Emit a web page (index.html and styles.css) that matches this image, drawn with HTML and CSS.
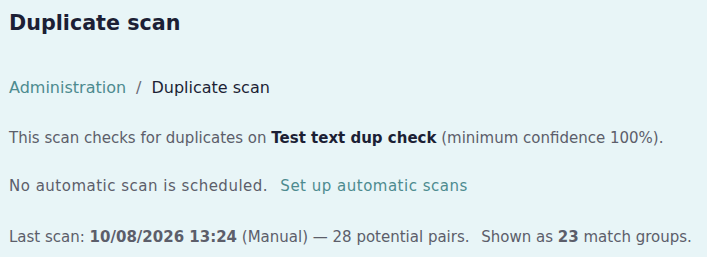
FILE: index.html
```html
<!DOCTYPE html>
<html lang="en">
<head>
<meta charset="utf-8">
<link rel="stylesheet" href="styles.css">
<title>Duplicate scan</title>
</head>
<body>
<main class="page">
  <h1 class="title">Duplicate scan</h1>
  <nav class="crumbs">
    <a class="crumb-link" href="#">Administration</a>
    <span class="crumb-sep">/</span>
    <span class="crumb-current">Duplicate scan</span>
  </nav>
  <p class="line line-first">This scan checks for duplicates on <strong class="strong-dark">Test text dup check</strong> (minimum confidence 100%).</p>
  <p class="line line-second">No automatic scan is scheduled. <a class="link" href="#">Set up automatic scans</a></p>
  <p class="line line-third">Last scan: <strong>10/08/2026 13:24</strong> (Manual) — 28 potential pairs. <span class="gap">Shown as <strong>23</strong> match groups.</span></p>
</main>
</body>
</html>
```
FILE: styles.css
```css
html, body {
  margin: 0;
  padding: 0;
  background: #e8f5f7;
}
body {
  font-family: "DejaVu Sans", "Open Sans", sans-serif;
  color: #5c5e6a;
}
.page {
  padding: 8px 9px 0 9px;
  display: flex;
  flex-direction: column;
}
.title {
  margin: 0;
  font-size: 20.7px;
  font-weight: 700;
  color: #1c1f35;
  line-height: 30px;
}
.crumbs {
  margin-top: 40px;
  display: flex;
  align-items: center;
  gap: 10px;
  font-size: 16px;
  line-height: 20px;
}
.crumb-link {
  color: #4d8b8f;
  text-decoration: none;
}
.crumb-sep {
  color: #6a6a74;
}
.crumb-current {
  color: #1c1f35;
}
.line {
  margin: 0;
  font-size: 15px;
  line-height: 20px;
  white-space: nowrap;
}
.line-first {
  margin-top: 30px;
}
.line-second {
  margin-top: 28px;
  letter-spacing: 0.5px;
}
.line-third {
  margin-top: 31px;
}
.strong-dark {
  color: #1c1f35;
  font-weight: 600;
}
strong {
  font-weight: 700;
}
.link {
  color: #4d8b8f;
  text-decoration: none;
  margin-left: 7px;
}
.gap {
  margin-left: 7px;
}
```
